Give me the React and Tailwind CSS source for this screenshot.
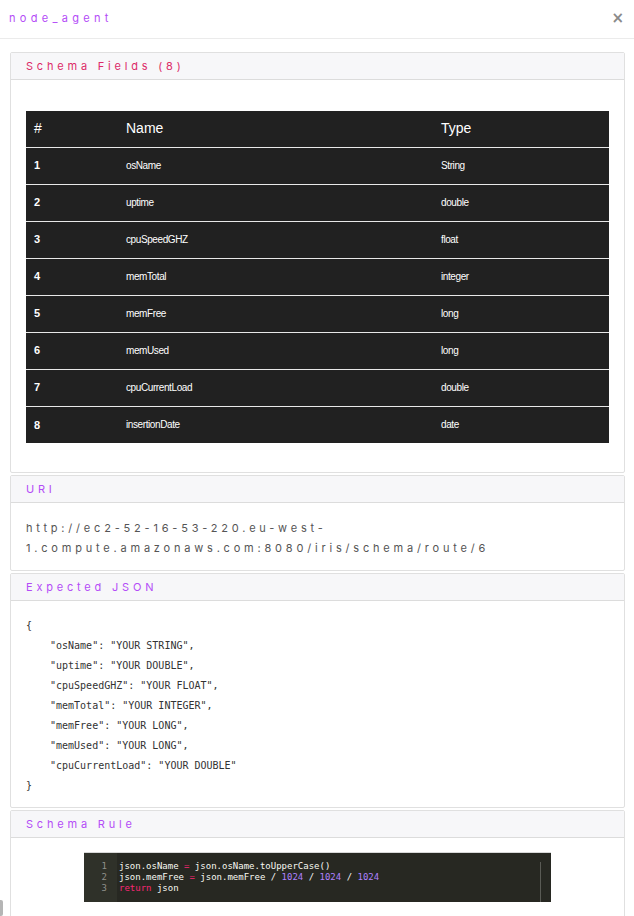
import React from "react";

const rows = [
  ["1", "osName", "String"],
  ["2", "uptime", "double"],
  ["3", "cpuSpeedGHZ", "float"],
  ["4", "memTotal", "integer"],
  ["5", "memFree", "long"],
  ["6", "memUsed", "long"],
  ["7", "cpuCurrentLoad", "double"],
  ["8", "insertionDate", "date"],
];

const jsonLines = [
  '"osName": "YOUR STRING",',
  '"uptime": "YOUR DOUBLE",',
  '"cpuSpeedGHZ": "YOUR FLOAT",',
  '"memTotal": "YOUR INTEGER",',
  '"memFree": "YOUR LONG",',
  '"memUsed": "YOUR LONG",',
  '"cpuCurrentLoad": "YOUR DOUBLE"',
];

const headFont = { fontFamily: "Inter, 'Open Sans', sans-serif" };

function Panel({ title, color, children }) {
  return (
    <div className="border border-[#e0e0e0] rounded-[2px] bg-white">
      <div className="h-[27px] bg-[#f7f7f9] border-b border-[#dcdcdc] flex items-center px-[15px]">
        <span
          className={`text-[11px] tracking-[3.8px] ${color}`}
          style={headFont}
        >
          {title}
        </span>
      </div>
      {children}
    </div>
  );
}

export default function App() {
  return (
    <div className="relative w-[634px] h-[916px] overflow-hidden bg-white">
      <div className="h-[39px] border-b border-[#ebebeb] flex items-center justify-between pl-[9px] pr-[10px] pb-[2px]">
        <span
          className="text-[11px] tracking-[4.3px] text-[#b44cf7]"
          style={headFont}
        >
          node_agent
        </span>
        <span
          className="text-[15px] font-bold text-[#8a8a8a] leading-none"
          style={{ fontFamily: "'DejaVu Sans', sans-serif" }}
        >
          ×
        </span>
      </div>

      <div className="pt-[13px] pl-[10px] pr-[9px] flex flex-col gap-[2px]">
        <Panel title="Schema Fields (8)" color="text-[#dc2a68]">
          <div className="px-[15px] pt-[31px] pb-[29px]">
            <table
              className="w-full bg-[#212121] text-white border-collapse"
              style={{ fontFamily: "'Liberation Sans', Arial, sans-serif" }}
            >
              <thead>
                <tr className="h-[36px] text-[14px]">
                  <th className="w-[92px] text-left font-normal pl-[8px]">#</th>
                  <th className="w-[315px] text-left font-normal pl-[8px]">Name</th>
                  <th className="text-left font-normal pl-[8px]">Type</th>
                </tr>
              </thead>
              <tbody>
                {rows.map(([n, name, type]) => (
                  <tr key={n} className="h-[37px] border-t border-[#e8e8e8]">
                    <td className="pl-[8px] text-[11px] font-bold">{n}</td>
                    <td className="pl-[8px] text-[10px] tracking-[-0.4px]">{name}</td>
                    <td className="pl-[8px] text-[10px] tracking-[-0.4px]">{type}</td>
                  </tr>
                ))}
              </tbody>
            </table>
          </div>
        </Panel>

        <Panel title="URI" color="text-[#b44cf7]">
          <div
            className="px-[15px] pt-[15px] pb-[12px] text-[11px] leading-[20px] tracking-[3.8px] text-[#555]"
            style={headFont}
          >
            http://ec2-52-16-53-220.eu-west-
            <br />
            1.compute.amazonaws.com:8080/iris/schema/route/6
          </div>
        </Panel>

        <Panel title="Expected JSON" color="text-[#b44cf7]">
          <div
            className="px-[15px] pt-[15px] pb-[11px] text-[10px] leading-[20px] text-[#333] whitespace-pre"
            style={{ fontFamily: "'DejaVu Sans Mono', monospace" }}
          >
            <div>{"{"}</div>
            {jsonLines.map((l) => (
              <div key={l} className="pl-[24px]">
                {l}
              </div>
            ))}
            <div>{"}"}</div>
          </div>
        </Panel>

        <Panel title="Schema Rule" color="text-[#b44cf7]">
          <div className="pt-[14px] pb-[20px]">
            <div
              className="relative w-[467px] h-[50px] mx-auto bg-[#272822] border-t border-[#d8d8d8] flex text-[9px] leading-[11px] whitespace-pre"
              style={{ fontFamily: "'DejaVu Sans Mono', monospace" }}
            >
              <div className="w-[33px] bg-[#2f3129] text-[#8f908a] text-right pr-[10px] pt-[8px]">
                <div>1</div>
                <div>2</div>
                <div>3</div>
              </div>
              <div className="pl-[2px] pt-[8px] text-[#f8f8f2]">
                <div>
                  json.osName <span className="text-[#f92672]">=</span> json.osName.toUpperCase()
                </div>
                <div>
                  json.memFree <span className="text-[#f92672]">=</span> json.memFree /{" "}
                  <span className="text-[#ae81ff]">1024</span> /{" "}
                  <span className="text-[#ae81ff]">1024</span> /{" "}
                  <span className="text-[#ae81ff]">1024</span>
                </div>
                <div>
                  <span className="text-[#f92672]">return</span> json
                </div>
              </div>
              <div className="absolute left-[456px] top-[9px] bottom-0 w-px bg-[#5a5b55]" />
            </div>
          </div>
        </Panel>
      </div>

      <div className="absolute left-0 top-[900px] w-[3px] h-[16px] rounded-r-[2px] bg-[#b5b5b5]" />
    </div>
  );
}
